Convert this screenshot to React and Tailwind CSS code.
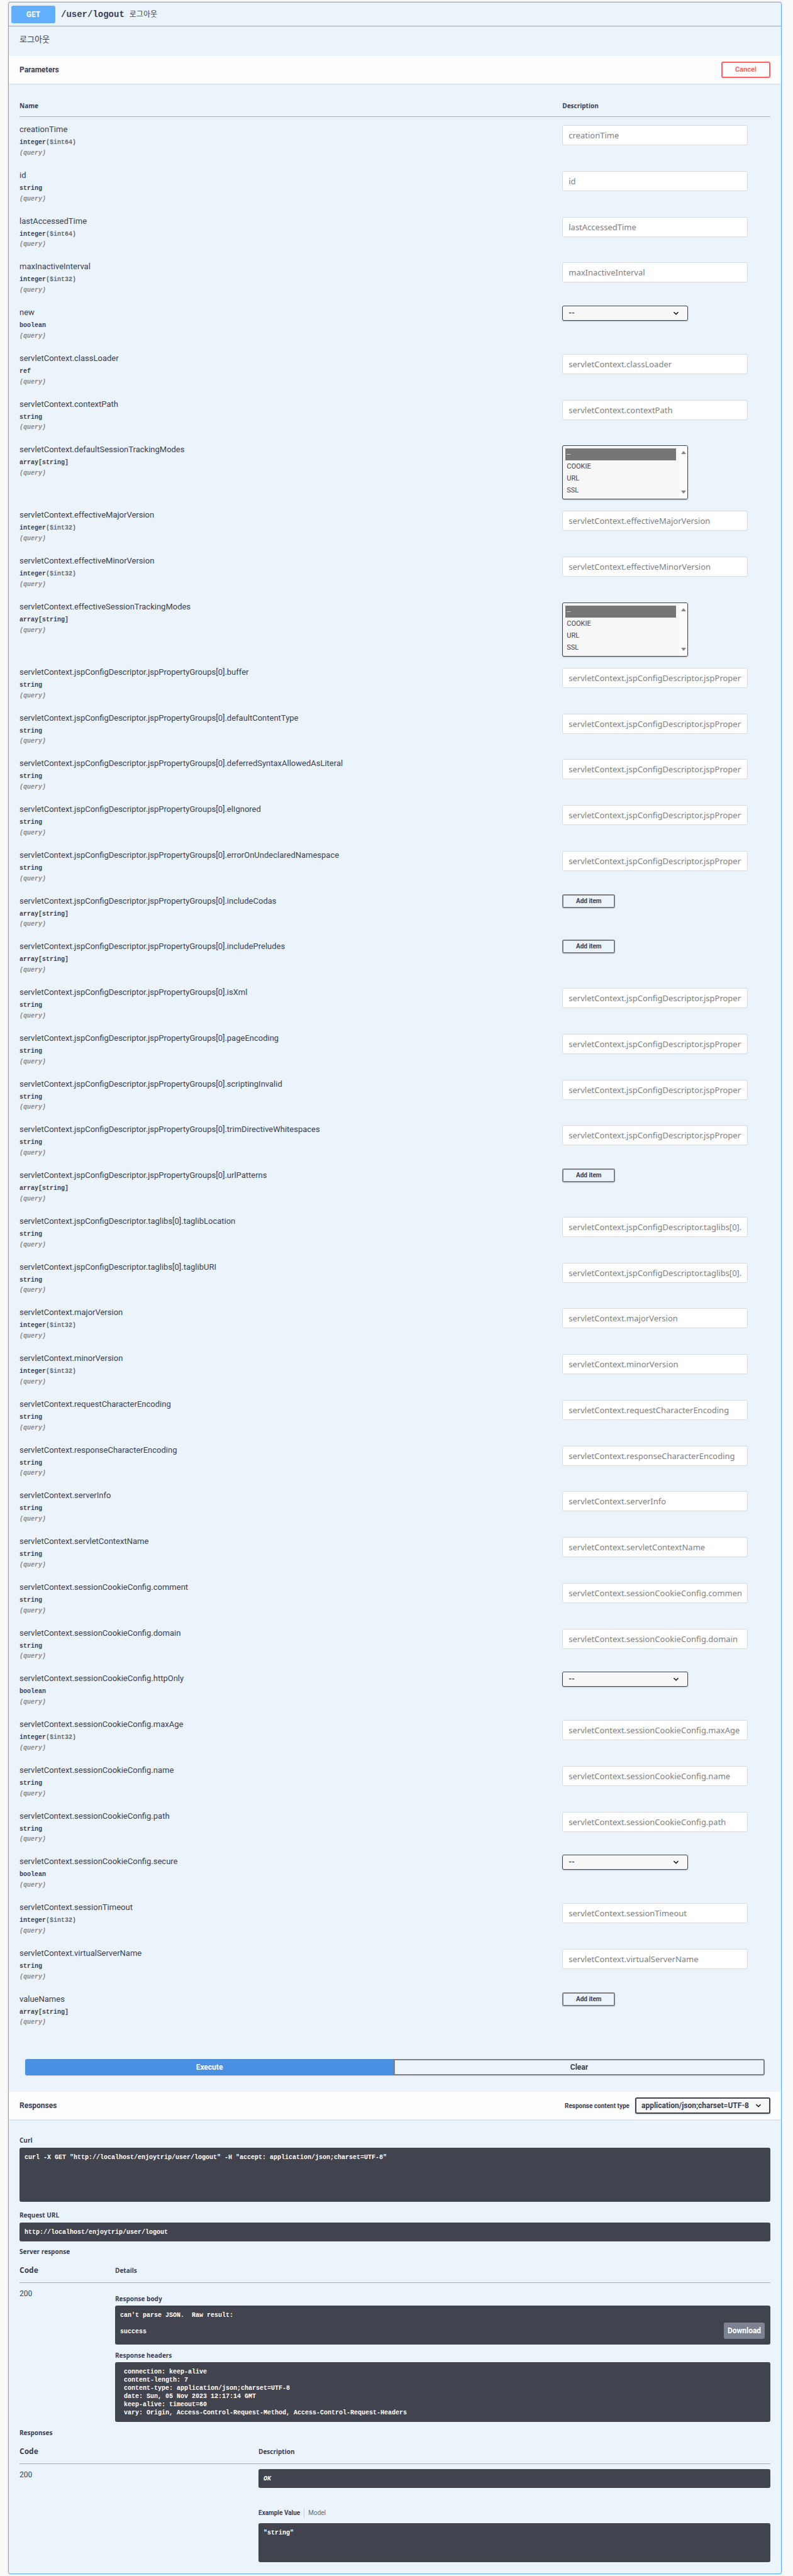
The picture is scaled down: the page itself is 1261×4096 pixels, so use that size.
import React from "react";

const JSP = "servletContext.jspConfigDescriptor.jspPropertyGroups[0].";
const TAG = "servletContext.jspConfigDescriptor.taglibs[0].";
const COOKIE = "servletContext.sessionCookieConfig.";

const PARAMS = [
  ["creationTime", "integer", "input", "($int64)"],
  ["id", "string", "input"],
  ["lastAccessedTime", "integer", "input", "($int64)"],
  ["maxInactiveInterval", "integer", "input", "($int32)"],
  ["new", "boolean", "select"],
  ["servletContext.classLoader", "ref", "input"],
  ["servletContext.contextPath", "string", "input"],
  ["servletContext.defaultSessionTrackingModes", "array[string]", "list"],
  ["servletContext.effectiveMajorVersion", "integer", "input", "($int32)"],
  ["servletContext.effectiveMinorVersion", "integer", "input", "($int32)"],
  ["servletContext.effectiveSessionTrackingModes", "array[string]", "list"],
  [JSP + "buffer", "string", "input"],
  [JSP + "defaultContentType", "string", "input"],
  [JSP + "deferredSyntaxAllowedAsLiteral", "string", "input"],
  [JSP + "elIgnored", "string", "input"],
  [JSP + "errorOnUndeclaredNamespace", "string", "input"],
  [JSP + "includeCodas", "array[string]", "add"],
  [JSP + "includePreludes", "array[string]", "add"],
  [JSP + "isXml", "string", "input"],
  [JSP + "pageEncoding", "string", "input"],
  [JSP + "scriptingInvalid", "string", "input"],
  [JSP + "trimDirectiveWhitespaces", "string", "input"],
  [JSP + "urlPatterns", "array[string]", "add"],
  [TAG + "taglibLocation", "string", "input"],
  [TAG + "taglibURI", "string", "input"],
  ["servletContext.majorVersion", "integer", "input", "($int32)"],
  ["servletContext.minorVersion", "integer", "input", "($int32)"],
  ["servletContext.requestCharacterEncoding", "string", "input"],
  ["servletContext.responseCharacterEncoding", "string", "input"],
  ["servletContext.serverInfo", "string", "input"],
  ["servletContext.servletContextName", "string", "input"],
  [COOKIE + "comment", "string", "input"],
  [COOKIE + "domain", "string", "input"],
  [COOKIE + "httpOnly", "boolean", "select"],
  [COOKIE + "maxAge", "integer", "input", "($int32)"],
  [COOKIE + "name", "string", "input"],
  [COOKIE + "path", "string", "input"],
  [COOKIE + "secure", "boolean", "select"],
  ["servletContext.sessionTimeout", "integer", "input", "($int32)"],
  ["servletContext.virtualServerName", "string", "input"],
  ["valueNames", "array[string]", "add"],
];

const HEADERS = ` connection: keep-alive
 content-length: 7
 content-type: application/json;charset=UTF-8
 date: Sun, 05 Nov 2023 12:17:14 GMT
 keep-alive: timeout=60
 vary: Origin, Access-Control-Request-Method, Access-Control-Request-Headers`;

function Chevron() {
  return (
    <svg
      viewBox="0 0 10 10"
      className="pointer-events-none absolute top-1/2 right-[14px] size-[10px] -translate-y-1/2"
      fill="none"
      stroke="#111"
      strokeWidth="1.6"
    >
      <path d="M1.5 3.2L5 6.7l3.500-3.500" />
    </svg>
  );
}

function BooleanSelect({ id }) {
  return (
    <div className="relative w-[200px]">
      <select
        id={id}
        className="block h-6 w-full appearance-none rounded-[3px] border border-[#41444e] bg-[#f7f7f7] px-[9px] text-xs font-bold text-[#3b4151] shadow-[0_1px_2px_rgba(0,0,0,0.25)]"
      >
        <option>--</option>
        <option>true</option>
        <option>false</option>
      </select>
      <Chevron />
    </div>
  );
}

function ListSelect({ id }) {
  const option =
    "h-[19px] min-h-0 px-[2px] pt-[3px] pb-0 text-[11px] checked:bg-[linear-gradient(#767676,#767676)] checked:text-[#dddddd]";
  return (
    <div className="relative mt-1 h-[86px] w-[200px]">
      <select
        id={id}
        multiple
        size={4}
        defaultValue={["--"]}
        className="block h-full w-full appearance-none overflow-hidden rounded-[3px] border border-[#41444e] bg-[#f7f7f7] py-1 pr-[18px] pl-1 text-[11px] text-[#3b4151] shadow-[0_1px_2px_rgba(0,0,0,0.25)]"
      >
        <option className={option}>--</option>
        <option className={option}>COOKIE</option>
        <option className={option}>URL</option>
        <option className={option}>SSL</option>
      </select>
      <div className="pointer-events-none absolute inset-y-px right-px flex w-[13px] flex-col items-center justify-between rounded-r-[2px] bg-[#fcfcfc] py-2">
        <svg viewBox="0 0 8 5" className="h-[5px] w-2" fill="#858585">
          <path d="M4 0l4 5H0z" />
        </svg>
        <svg viewBox="0 0 8 5" className="h-[5px] w-2" fill="#858585">
          <path d="M4 5l4-5H0z" />
        </svg>
      </div>
    </div>
  );
}

function Control({ kind, name }) {
  if (kind === "select") return <BooleanSelect id={name} />;
  if (kind === "list") return <ListSelect id={name} />;
  if (kind === "add")
    return (
      <button
        id={name}
        type="button"
        className="block h-[22px] w-[84px] rounded-[3px] border-2 border-[#808080] text-[10px] leading-none font-bold shadow-[0_1px_2px_rgba(0,0,0,0.1)]"
      >
        Add item
      </button>
    );
  return (
    <input
      id={name}
      type="text"
      placeholder={name}
      className="mt-1 block h-8 w-[295px] max-w-full rounded-[3px] border border-[#d9d9d9] bg-white px-[9px] font-[Noto_Sans,sans-serif] text-[13px] placeholder:text-[#808080]"
    />
  );
}

function ParamRow({ param }) {
  const [name, type, kind, format] = param;
  return (
    <tr className="align-top">
      <td className="pt-[9px] pb-2">
        <label htmlFor={name} className="block text-[13px] leading-[22px]">
          {name}
        </label>
        <div className="mt-[3px] font-[Liberation_Mono,monospace] text-[10px] leading-snug font-bold">
          {type}
          {format && <span className="text-[#6b6b6b]">{format}</span>}
        </div>
        <div className="mt-[3px] font-[Liberation_Mono,monospace] text-[10px] leading-[14px] font-bold text-[#888888] italic">
          (query)
        </div>
      </td>
      <td className="pt-[9px] pb-[5px]">
        <Control kind={kind} name={name} />
      </td>
    </tr>
  );
}

function SectionHeader({ title, children }) {
  return (
    <div className="flex h-11 items-center justify-between bg-white/80 px-[17px] shadow-[0_1px_2px_rgba(0,0,0,0.1)]">
      <h4 className="text-xs font-bold">{title}</h4>
      {children}
    </div>
  );
}

const smallHead =
  "font-[Open_Sans,sans-serif] text-[10px] leading-4 font-bold";
const codeBox =
  "rounded-[3px] bg-[#41444e] px-2 pt-[9px] pb-2 font-[Liberation_Mono,monospace] text-[10px] leading-[13px] font-bold text-white";
const codeHead =
  "border-b border-[#3b4151]/40 pt-[14px] pb-[11px] text-left font-[Open_Sans,sans-serif] text-xs leading-4 font-bold";
const detailHead =
  "border-b border-[#3b4151]/40 pt-[14px] pb-[11px] text-left font-[Open_Sans,sans-serif] text-[10px] leading-4 font-bold";

export default function App() {
  return (
    <div className="bg-[#fafafa] py-[3px] pr-[18px] pl-[13px] font-[Roboto,Noto_Sans_CJK_KR,sans-serif] text-[#3b4151]">
      <main className="rounded-[3px] border border-[#61affe] bg-[#ebf3fb] shadow-[0_0_3px_rgba(0,0,0,0.19)]">
        <div className="flex items-center border-b border-[#61affe] px-1 pt-[5px] pb-1">
          <span className="flex h-7 w-[70px] items-center justify-center rounded-[3px] bg-[#61affe] text-xs font-bold text-white">
            GET
          </span>
          <span className="ml-[9px] font-[Liberation_Mono,monospace] text-sm font-bold">
            /user/logout
          </span>
          <span className="ml-2 text-xs">로그아웃</span>
        </div>
        <p className="px-[17px] pt-[13px] pb-[18px] text-[13px] leading-4">
          로그아웃
        </p>

        <SectionHeader title="Parameters">
          <button
            type="button"
            className="h-[26px] w-[78px] rounded-[3px] border-2 border-[#ff6060] text-[11px] font-bold text-[#ff6060] shadow-[0_1px_2px_rgba(0,0,0,0.1)]"
          >
            Cancel
          </button>
        </SectionHeader>

        <div className="px-[17px] pt-[17px]">
          <table className="w-full table-fixed border-separate border-spacing-0">
            <thead>
              <tr className="text-left font-[Open_Sans,sans-serif] text-[10px] leading-4">
                <th className="w-[72.3%] border-b border-[#3b4151]/40 pt-[10px] pb-[9px]">
                  Name
                </th>
                <th className="border-b border-[#3b4151]/40 pt-[10px] pb-[9px]">
                  Description
                </th>
              </tr>
            </thead>
            <tbody>
              {PARAMS.map((p) => (
                <ParamRow key={p[0]} param={p} />
              ))}
            </tbody>
          </table>
        </div>

        <div className="flex px-[26px] pt-[43px] pb-[26px] text-xs font-bold">
          <button
            type="button"
            className="h-[26px] flex-1 rounded-l-[3px] bg-[#4990e2] text-white shadow-[0_1px_2px_rgba(0,0,0,0.1)]"
          >
            Execute
          </button>
          <button
            type="button"
            className="h-[26px] flex-1 rounded-r-[3px] border-2 border-[#808080] shadow-[0_1px_2px_rgba(0,0,0,0.1)]"
          >
            Clear
          </button>
        </div>

        <SectionHeader title="Responses">
          <div className="flex items-center gap-[9px]">
            <label htmlFor="content-type" className="text-[10px] font-bold">
              Response content type
            </label>
            <div className="relative w-[215px]">
              <select
                id="content-type"
                className="block h-[26px] w-full appearance-none rounded-[3px] border-2 border-[#41444e] bg-[#f7f7f7] pl-2 text-xs font-bold shadow-[0_1px_2px_rgba(0,0,0,0.25)]"
              >
                <option>application/json;charset=UTF-8</option>
              </select>
              <Chevron />
            </div>
          </div>
        </SectionHeader>

        <div className="px-[17px] pt-[25px] pb-[18px]">
          <h4 className={smallHead}>Curl</h4>
          <pre className={`mt-1 min-h-[86px] ${codeBox}`}>
            {`curl -X GET "http://localhost/enjoytrip/user/logout" -H "accept: application/json;charset=UTF-8"`}
          </pre>
          <h4 className={`mt-[13px] ${smallHead}`}>Request URL</h4>
          <pre className={`mt-1 min-h-[30px] ${codeBox}`}>
            http://localhost/enjoytrip/user/logout
          </pre>
          <h4 className={`mt-2 ${smallHead}`}>Server response</h4>

          <table className="w-full table-fixed border-separate border-spacing-0">
            <thead>
              <tr>
                <th className={`w-[152px] ${codeHead}`}>Code</th>
                <th className={detailHead}>Details</th>
              </tr>
            </thead>
            <tbody>
              <tr className="align-top">
                <td className="pt-[9px] text-xs leading-4">200</td>
                <td className="pt-[17px]">
                  <h5 className={smallHead}>Response body</h5>
                  <div className="relative mt-[3px]">
                    <pre className={`min-h-[62px] ${codeBox}`}>
                      {"can't parse JSON.  Raw result:\n\nsuccess"}
                    </pre>
                    <button
                      type="button"
                      className="absolute right-[9px] bottom-[9px] h-[26px] w-[65px] rounded-[3px] bg-[#7d8293] text-xs font-bold text-white"
                    >
                      Download
                    </button>
                  </div>
                  <h5 className={`mt-[9px] ${smallHead}`}>Response headers</h5>
                  <pre className={`mt-[3px] min-h-[95px] ${codeBox}`}>
                    {HEADERS}
                  </pre>
                </td>
              </tr>
            </tbody>
          </table>

          <h4 className={`mt-[9px] ${smallHead}`}>Responses</h4>
          <table className="w-full table-fixed border-separate border-spacing-0">
            <thead>
              <tr>
                <th className={`w-[380px] ${codeHead}`}>Code</th>
                <th className={detailHead}>Description</th>
              </tr>
            </thead>
            <tbody>
              <tr className="align-top">
                <td className="pt-[9px] text-xs leading-4">200</td>
                <td className="pt-2">
                  <div className={`min-h-[30px] italic ${codeBox}`}>OK</div>
                  <div className="mt-8 flex text-[10px] leading-4">
                    <button
                      type="button"
                      className="border-r border-[#3b4151]/20 pr-[6px] font-bold"
                    >
                      Example Value
                    </button>
                    <button type="button" className="pl-[6px] text-[#6b6b6b]">
                      Model
                    </button>
                  </div>
                  <pre className={`mt-2 min-h-[62px] ${codeBox}`}>
                    "string"
                  </pre>
                </td>
              </tr>
            </tbody>
          </table>
        </div>
      </main>
    </div>
  );
}
